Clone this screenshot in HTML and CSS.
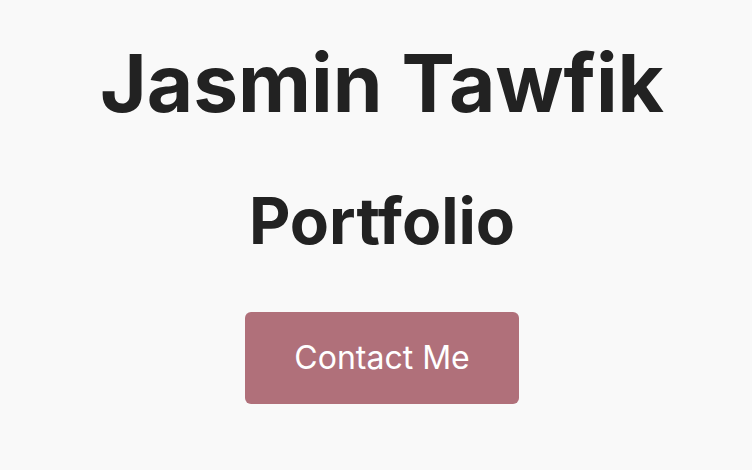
FILE: index.html
```html
<!DOCTYPE html>
<html lang="en">
<head>
<meta charset="utf-8">
<title>Jasmin Tawfik</title>
<link rel="stylesheet" href="styles.css">
</head>
<body>
<main class="hero">
  <h1 class="name">Jasmin Tawfik</h1>
  <h2 class="subtitle">Portfolio</h2>
  <a class="contact-btn" href="#contact">Contact Me</a>
</main>
</body>
</html>
```
FILE: styles.css
```css
html, body {
  margin: 0;
  padding: 0;
  background: #f9f9f9;
}
body {
  font-family: Inter, "Liberation Sans", sans-serif;
  color: #222222;
}
.hero {
  display: flex;
  flex-direction: column;
  align-items: center;
  padding: 35px 0 0 12px;
}
.name {
  margin: 0;
  font-size: 80px;
  line-height: 96px;
  font-weight: 700;
}
.subtitle {
  margin: 52px 0 0;
  font-size: 64px;
  line-height: 76.8px;
  font-weight: 700;
}
.contact-btn {
  margin-top: 52.6px;
  display: block;
  background: #b0707a;
  color: #ffffff;
  text-decoration: none;
  font-size: 32px;
  line-height: 38.4px;
  padding: 26.5px 49.5px;
  border-radius: 6px;
}
```
